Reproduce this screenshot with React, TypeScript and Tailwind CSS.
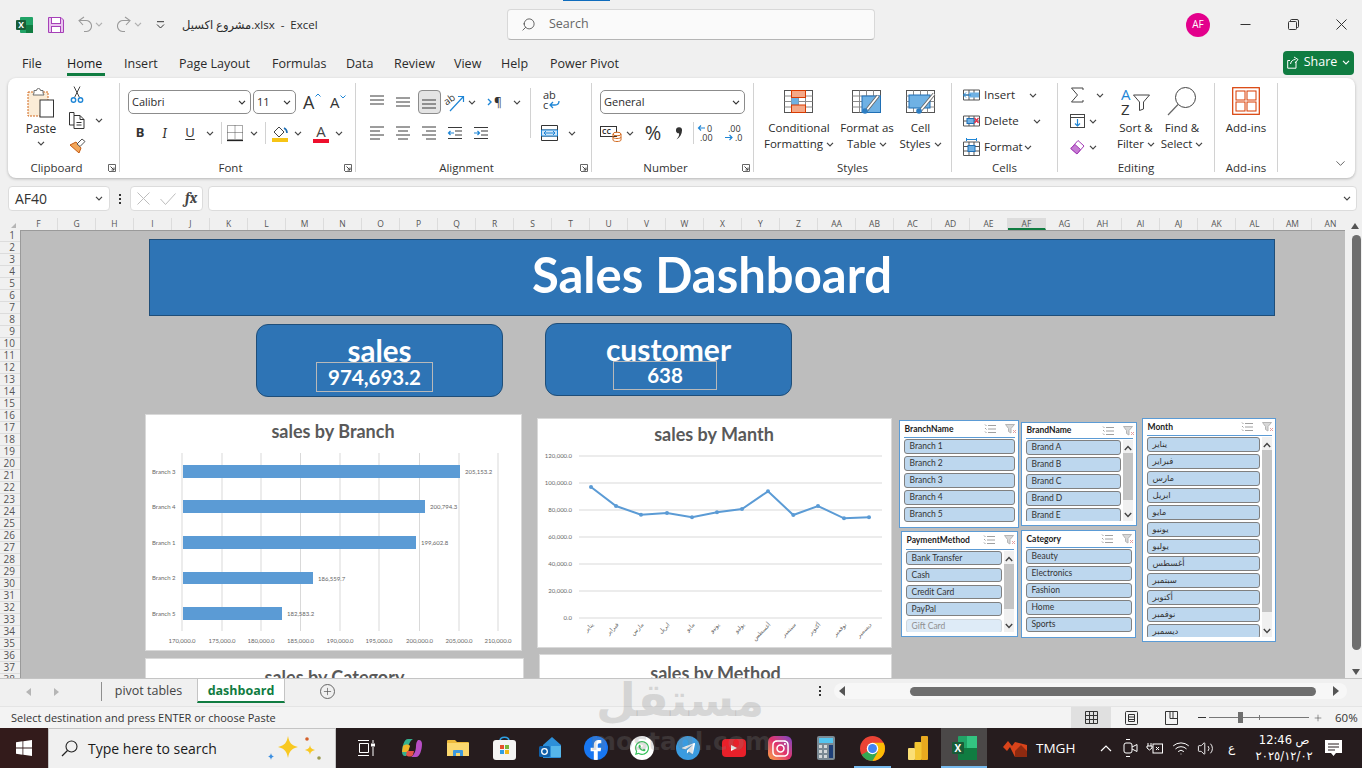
import { FaFacebookF, FaInstagram, FaTelegramPlane, FaWhatsapp } from 'react-icons/fa'
import { ChevronDown, Plus, Search, Volume2, Wifi } from 'lucide-react'

const calibri = { fontFamily: '"Lato", "DejaVu Sans", sans-serif' }

function Chev({ c = '#444' }: { c?: string }) {
  return (
    <svg width="8" height="5" viewBox="0 0 8 5" className="shrink-0">
      <path d="M1 .8l3 3 3-3" stroke={c} strokeWidth="1.2" fill="none" />
    </svg>
  )
}

function Launcher() {
  return (
    <svg width="8" height="8" viewBox="0 0 8 8" className="absolute right-[3px] bottom-[6px]">
      <path d="M.5 7V.5H7.5V7.5H1" stroke="#666" fill="none" strokeWidth="1" />
      <path d="M2.5 2.5L6 6M6 3.5V6H3.5" stroke="#444" fill="none" strokeWidth="1" />
    </svg>
  )
}

function Sep({ className = '' }: { className?: string }) {
  return <div className={`w-px self-stretch bg-[#d2d2d2] ${className}`} />
}

function Group({ w, label, launcher, children }: { w: string; label: string; launcher?: boolean; children: React.ReactNode }) {
  return (
    <div className={`relative flex h-full shrink-0 flex-col ${w}`}>
      <div className="min-h-0 flex-1">{children}</div>
      <div className={`h-5 text-center text-[11.5px] leading-5 text-[#333] ${launcher ? 'pr-[14px]' : ''}`}>{label}</div>
      {launcher && <Launcher />}
    </div>
  )
}

function Select({ w, text, className = '' }: { w: string; text: string; className?: string }) {
  return (
    <div className={`flex h-6 items-center justify-between rounded-[5px] border border-[#8c8c8c] bg-white pl-[3px] pr-[4px] text-[11px] ${w} ${className}`}>
      <span>{text}</span>
      <Chev c="#333" />
    </div>
  )
}

function AlignLines({ y, xs }: { y: number[]; xs: [number, number][] }) {
  return (
    <svg width="18" height="16" viewBox="0 0 18 16">
      {y.map((v, i) => (
        <path key={i} d={`M${xs[i][0]} ${v}H${xs[i][1]}`} stroke="#3a3a3a" strokeWidth="1" />
      ))}
    </svg>
  )
}

function IndentIcon({ inc }: { inc?: boolean }) {
  return (
    <svg width="16" height="14" viewBox="0 0 16 14">
      <path d="M1 1.5H15M8 5H15M8 9H15M1 12.5H15" stroke="#3a3a3a" />
      <path d={inc ? 'M1 7H6.5M4.5 5l2 2-2 2' : 'M7 7H1.5M3.5 5l-2 2 2 2'} stroke="#1f86d6" strokeWidth="1.2" fill="none" />
    </svg>
  )
}

function ClipboardGroup() {
  return (
    <Group w="w-[111px]" label="Clipboard" launcher>
      <div className="flex pt-2">
        <div className="ml-[5px] flex w-[56px] flex-col items-center">
          <svg width="28" height="32" viewBox="0 0 28 32" className="mt-px">
            <rect x="1" y="5" width="20" height="24" fill="#fbecd7" stroke="#d2691e" strokeDasharray="2 1" />
            <path d="M7 6V3.5h2.5a2 2 0 0 1 4 0H16V6l1 2H6z" fill="#fff" stroke="#6f6f6f" />
            <rect x="13" y="13" width="13.5" height="17" fill="#fff" stroke="#333" />
          </svg>
          <span className="mt-[2px] text-[12px] leading-4">Paste</span>
          <div className="mt-[4px]"><Chev /></div>
        </div>
        <div className="flex flex-col gap-[9px]">
          <svg width="16" height="17" viewBox="0 0 16 17">
            <path d="M5 .5l5.5 11M11 .5L5.5 11.5" stroke="#444" fill="none" />
            <circle cx="4.5" cy="14" r="2.2" fill="none" stroke="#1f86d6" strokeWidth="1.4" />
            <circle cx="11.5" cy="14" r="2.2" fill="none" stroke="#1f86d6" strokeWidth="1.4" />
          </svg>
          <div className="flex items-center">
            <svg width="16" height="17" viewBox="0 0 16 17" className="shrink-0">
              <path d="M5 3.5V.5h-4.5V13H5" fill="none" stroke="#333" />
              <path d="M5 3.5H11l4 4V16.5H5zM11 3.5V7.5H15M7.5 10.5h5M7.5 13h5" fill="#fff" stroke="#333" />
            </svg>
            <div className="ml-[10px]"><Chev /></div>
          </div>
          <svg width="17" height="15" viewBox="0 0 17 15">
            <path d="M1 7l6-3 5 6-2 5z" fill="#f2a65a" stroke="#c55a11" />
            <path d="M8 6l5-5 3 2.5-5 5z" fill="#fff" stroke="#555" />
          </svg>
        </div>
      </div>
    </Group>
  )
}

function FontGroup() {
  return (
    <Group w="w-[235px]" label="Font" launcher>
      <div className="mt-3 flex h-6 items-center pl-2">
        <Select w="w-[123px]" text="Calibri" />
        <Select w="w-[43px]" text="11" className="ml-[2px]" />
        <div className="relative ml-[7px] w-[15px] text-[18px] leading-none text-[#333]">A
          <svg width="6" height="4" viewBox="0 0 6 4" className="absolute -right-[3px] top-0"><path d="M.5 3.500L3 1l2.500 2.500" stroke="#1f86d6" fill="none" /></svg>
        </div>
        <div className="relative ml-[12px] w-[14px] text-[15px] leading-none text-[#333]">A
          <svg width="6" height="4" viewBox="0 0 6 4" className="absolute right-[-2px] top-0"><path d="M.5.5l2.5 2.500L5.500.5" stroke="#1f86d6" fill="none" /></svg>
        </div>
      </div>
      <div className="mt-[7px] flex h-6 items-center pl-2 text-[#333]">
        <span className="w-6 text-center text-[13px] font-bold" style={{ fontFamily: '"Noto Sans", sans-serif' }}>B</span>
        <span className="w-[25px] text-center font-serif text-[14px] italic">I</span>
        <span className="w-[26px] text-center text-[13px] underline underline-offset-2">U</span>
        <div className="ml-[3px]"><Chev /></div>
        <Sep className="my-[1px] ml-[7px]" />
        <svg width="18" height="17" viewBox="0 0 18 17" className="ml-1 shrink-0">
          <path d="M1.500.5H16.500V14.500H1.500zM9 .5V14.500M1.500 7.500H16.500" fill="none" stroke="#555" strokeDasharray="1 1" />
          <path d="M1 15.500H17" stroke="#222" strokeWidth="1.3" />
        </svg>
        <div className="ml-[6px]"><Chev /></div>
        <Sep className="my-[1px] ml-[7px]" />
        <svg width="18" height="18" viewBox="0 0 18 18" className="ml-[5px] shrink-0">
          <path d="M3 8l5-5 5 5-5 5z" fill="#fff" stroke="#444" />
          <path d="M13 4c2 1 3 3 3 5" stroke="#1f6fb5" strokeWidth="1.6" fill="none" />
          <rect x="1" y="14" width="16" height="4" fill="#f6c416" />
        </svg>
        <div className="ml-[5px]"><Chev /></div>
        <div className="ml-[11px] flex w-4 flex-col items-center">
          <span className="h-[14px] text-[15px] leading-[14px] text-[#444]">A</span>
          <div className="mt-[1px] h-1 w-4 bg-[#ee0f2d]" />
        </div>
        <div className="ml-[6px]"><Chev /></div>
      </div>
    </Group>
  )
}

function AlignmentGroup() {
  const wide: [number, number][] = [[2, 16], [2, 16], [2, 16], [2, 16]]
  return (
    <Group w="w-[235px]" label="Alignment" launcher>
      <div className="flex h-full pt-[1px]">
        <div className="w-[174px] pt-[11px]">
          <div className="flex h-6 items-center pl-2">
            <div className="flex w-[26px] justify-center"><AlignLines y={[2, 6, 10]} xs={wide} /></div>
            <div className="flex w-[26px] justify-center"><AlignLines y={[4, 8, 12]} xs={wide} /></div>
            <div className="mx-[1.500px] flex h-6 w-[23px] items-center justify-center rounded-[4px] border border-[#8c8c8c] bg-[#e4e4e4]"><AlignLines y={[6, 10, 14]} xs={wide} /></div>
            <svg width="22" height="20" viewBox="0 0 22 20" className="mx-[2px] shrink-0">
              <text x="1" y="11" fontSize="10" fill="#333" transform="rotate(-35 6 10)">ab</text>
              <path d="M6 19L19 5M14 4.500h5.500V10" stroke="#1f86d6" fill="none" strokeWidth="1.200" />
            </svg>
            <Chev />
            <svg width="20" height="14" viewBox="0 0 20 14" className="ml-[11px] shrink-0">
              <path d="M1 4l3 3-3 3" stroke="#1f86d6" fill="none" strokeWidth="1.400" />
              <text x="7" y="12" fontSize="12" fill="#333">¶</text>
            </svg>
            <div className="ml-[6px]"><Chev /></div>
          </div>
          <div className="mt-[7px] flex h-6 items-center pl-2">
            <div className="flex w-[26px] justify-center"><AlignLines y={[2, 6, 10, 14]} xs={[[2, 16], [2, 12], [2, 16], [2, 12]]} /></div>
            <div className="flex w-[26px] justify-center"><AlignLines y={[2, 6, 10, 14]} xs={[[2, 16], [4, 14], [2, 16], [4, 14]]} /></div>
            <div className="flex w-[26px] justify-center"><AlignLines y={[2, 6, 10, 14]} xs={[[2, 16], [6, 16], [2, 16], [6, 16]]} /></div>
            <div className="flex w-[26px] justify-center"><IndentIcon /></div>
            <div className="flex w-[26px] justify-center"><IndentIcon inc /></div>
          </div>
        </div>
        <Sep className="mb-[20px] mt-[9px]" />
        <div className="pt-[11px]">
          <div className="flex h-6 pl-[8px]">
            <svg width="22" height="22" viewBox="0 0 22 22">
              <text x="4" y="9" fontSize="11" fill="#333">ab</text>
              <text x="4" y="19" fontSize="11" fill="#333">c</text>
              <path d="M20 11c0 3-1 4-4 4h-5M14 12l-3 3 3 3" stroke="#1f86d6" fill="none" strokeWidth="1.300" />
            </svg>
          </div>
          <div className="mt-[7px] flex h-6 items-center pl-[10px]">
            <svg width="17" height="16" viewBox="0 0 17 16" className="shrink-0">
              <path d="M.5.5h16v15H.5zM.5 5H16.500M.5 11H16.500" fill="#fff" stroke="#333" />
              <path d="M.5 5h16v6H.5z" fill="#cfe5f8" stroke="#1f86d6" />
              <path d="M3 8h11M5 6l-2 2 2 2M12 6l2 2-2 2" stroke="#1f86d6" fill="none" />
            </svg>
            <div className="ml-[10px]"><Chev /></div>
          </div>
        </div>
      </div>
    </Group>
  )
}

function NumberGroup() {
  return (
    <Group w="w-[161px]" label="Number" launcher>
      <div className="mt-3 pl-2"><Select w="w-[145px]" text="General" /></div>
      <div className="mt-[7px] flex h-6 items-center pl-2 text-[#333]">
        <svg width="22" height="18" viewBox="0 0 22 18" className="shrink-0">
          <rect x=".5" y="2.500" width="16" height="10" fill="#fff" stroke="#333" />
          <text x="2" y="10" fontSize="7" fontWeight="bold" fill="#333">CC</text>
          <ellipse cx="17" cy="10" rx="4" ry="1.800" fill="#fff" stroke="#d2691e" />
          <path d="M13 10v6c0 2 8 2 8 0v-6M13 13c0 2 8 2 8 0" fill="none" stroke="#d2691e" />
        </svg>
        <div className="ml-1"><Chev /></div>
        <span className="ml-[9px] w-5 text-center text-[20px] leading-none">%</span>
        <svg width="8" height="13" viewBox="0 0 8 13" className="ml-[12px] shrink-0"><path d="M1 3a3 3 0 1 1 6 .5C7 7 5 10.500 1.500 12.500 3.500 10 4.500 8 4 6.200A3 3 0 0 1 1 3z" fill="#333" /></svg>
        <Sep className="my-[1px] ml-[10px]" />
        <svg width="20" height="18" viewBox="0 0 20 18" className="ml-[3px] shrink-0">
          <path d="M8 4H1.500M4 1.500L1.500 4 4 6.500" fill="none" stroke="#1f86d6" strokeWidth="1.200" />
          <text x="10" y="8" fontSize="9" fill="#333">0</text>
          <text x="3" y="17" fontSize="9" fill="#333">.00</text>
        </svg>
        <svg width="20" height="18" viewBox="0 0 20 18" className="ml-[7px] shrink-0">
          <text x="4" y="8" fontSize="9" fill="#333">.00</text>
          <path d="M1 13.500H8M5.500 11l2.500 2.500L5.500 16" fill="none" stroke="#1f86d6" strokeWidth="1.200" />
          <text x="11" y="17" fontSize="9" fill="#333">.0</text>
        </svg>
      </div>
    </Group>
  )
}

function BigCol({ w, icon, lines, up }: { w: string; icon: React.ReactNode; lines: [string, string | null, boolean?]; up?: boolean }) {
  return (
    <div className={`flex flex-col items-center ${w}`}>
      <div className={`flex h-[30px] justify-center ${up ? '-mt-[3px] mb-[3px]' : ''}`}>{icon}</div>
      <span className="h-4 whitespace-nowrap text-[11.500px] leading-4">{lines[0]}</span>
      {lines[1] && (
        <span className="flex h-4 items-center gap-[3px] whitespace-nowrap text-[11.500px] leading-4">
          {lines[1]} {lines[2] && <Chev />}
        </span>
      )}
    </div>
  )
}

function GridBase({ children }: { children?: React.ReactNode }) {
  return (
    <svg width="30" height="24" viewBox="0 0 30 24">
      <rect x=".5" y=".5" width="28" height="22" fill="#fff" stroke="#555" />
      <path d="M7.500.5V22.500M14.500.5V22.500M21.500.5V22.500M.5 6H28.500M.5 11.500H28.500M.5 17H28.500" stroke="#8a8a8a" />
      {children}
    </svg>
  )
}

function StylesGroup() {
  return (
    <Group w="w-[197px]" label="Styles">
      <div className="flex pt-3">
        <BigCol w="w-[90px]" lines={['Conditional', 'Formatting', true]} icon={
          <GridBase>
            <rect x="7.500" y=".5" width="14" height="7" fill="#f4a988" stroke="#d83b01" />
            <rect x="7.500" y="8" width="7" height="7" fill="#6fb1e4" />
            <rect x="7.500" y="15" width="14" height="7.500" fill="#f4a988" stroke="#d83b01" />
          </GridBase>} />
        <BigCol w="w-[46px]" lines={['Format as', 'Table', true]} icon={
          <GridBase>
            <rect x="10" y="6" width="18.500" height="16.500" fill="#6fb1e4" stroke="#1f6fb5" />
            <path d="M14 21L26 6" stroke="#666" strokeWidth="3.500" />
            <path d="M14 21L26 6" stroke="#fff" strokeWidth="1.800" />
            <circle cx="13" cy="21" r="2.800" fill="#2d7dc2" />
          </GridBase>} />
        <BigCol w="w-[61px]" lines={['Cell', 'Styles', true]} icon={
          <GridBase>
            <rect x="3" y="5" width="21" height="13" fill="#6fb1e4" stroke="#1f6fb5" />
            <path d="M14 21L28 4" stroke="#666" strokeWidth="3.500" />
            <path d="M14 21L28 4" stroke="#fff" strokeWidth="1.800" />
            <circle cx="13" cy="21" r="2.800" fill="#2d7dc2" />
          </GridBase>} />
      </div>
    </Group>
  )
}

function CellRow({ icon, text, w }: { icon: React.ReactNode; text: string; w: string }) {
  return (
    <div className="flex h-[18px] items-center pl-[11px]">
      <div className="w-[17px] shrink-0">{icon}</div>
      <span className={`ml-1 shrink-0 text-[11.500px] ${w}`}>{text}</span>
      <Chev />
    </div>
  )
}

function CellsGroup() {
  const grid = 'M.5 3h16v10H.5zM6 3V13M11 3V13M.5 8H16.500'
  return (
    <Group w="w-[105px]" label="Cells">
      <div className="flex flex-col gap-2 pt-2">
        <CellRow text="Insert" w="w-[45px]" icon={
          <svg width="17" height="16" viewBox="0 0 17 16"><path d={grid} fill="#fff" stroke="#555" /><rect x="6" y="5.500" width="10" height="5" fill="#6fb1e4" /><path d="M8 8H.5M3 5.500L.5 8 3 10.500" stroke="#1f86d6" fill="none" /></svg>} />
        <CellRow text="Delete" w="w-[49px]" icon={
          <svg width="17" height="16" viewBox="0 0 17 16"><path d={grid} fill="#fff" stroke="#555" /><rect x="4" y="5.500" width="7" height="5" fill="#6fb1e4" stroke="#1f6fb5" /><path d="M11.500 5l4 5M15.500 5l-4 5" stroke="#e8304a" strokeWidth="1.300" /></svg>} />
        <CellRow text="Format" w="w-[40px]" icon={
          <svg width="17" height="18" viewBox="0 0 17 18"><path d="M.5 4h16v13.500H.5zM6 4V17.500M11 4V17.500M.5 8.500H16.500M.5 13H16.500" fill="#fff" stroke="#555" /><rect x="5" y="7.500" width="7" height="6" fill="#6fb1e4" stroke="#1f6fb5" /><path d="M3.500 1.500h10M3.500 0v3M13.500 0v3" stroke="#1f86d6" /></svg>} />
      </div>
    </Group>
  )
}

function EditingGroup() {
  return (
    <Group w="w-[156px]" label="Editing">
      <div className="flex">
        <div className="flex w-[54px] flex-col gap-2 pl-3 pt-2">
          <div className="flex h-[18px] items-center">
            <svg width="15" height="16" viewBox="0 0 15 16" className="shrink-0"><path d="M13 3V1H1.500L7.500 8 1.500 15H13v-2" stroke="#444" fill="none" /></svg>
            <div className="ml-[11px]"><Chev /></div>
          </div>
          <div className="flex h-[18px] items-center">
            <svg width="15" height="16" viewBox="0 0 15 16" className="shrink-0"><rect x=".5" y="1.500" width="14" height="13" fill="#fff" stroke="#444" /><path d="M.5 4.500H14.500" stroke="#444" /><path d="M7.500 6v7M5 10.500l2.500 2.500L10 10.500" stroke="#1f86d6" fill="none" strokeWidth="1.200" /></svg>
            <div className="ml-1"><Chev /></div>
          </div>
          <div className="flex h-[18px] items-center">
            <svg width="15" height="16" viewBox="0 0 15 16" className="shrink-0"><path d="M.8 9.500L8 1.500l6 5.500-7 8z" fill="#fff" stroke="#a23ab5" /><path d="M.8 9.500L5 5.500l5.500 5-3.500 4.500z" fill="#c67bd4" stroke="#a23ab5" /></svg>
            <div className="ml-1"><Chev /></div>
          </div>
        </div>
        <div className="flex pt-3">
          <BigCol w="w-[48px]" up lines={['Sort &', 'Filter', true]} icon={
            <svg width="30" height="29" viewBox="0 0 30 29">
              <text x="0" y="13" fontSize="15" fill="#1f86d6">A</text>
              <text x="0" y="28" fontSize="15" fill="#333">Z</text>
              <path d="M12.500 8h16L22.500 15v7l-4 1.500V15z" fill="#fff" stroke="#444" />
            </svg>} />
          <BigCol w="w-[44px]" up lines={['Find &', 'Select', true]} icon={
            <svg width="30" height="29" viewBox="0 0 30 29">
              <circle cx="18.500" cy="10.500" r="10" fill="#fff" stroke="#444" />
              <path d="M11 17.500L1 28" stroke="#666" strokeWidth="1.200" />
            </svg>} />
        </div>
      </div>
    </Group>
  )
}

function AddinsGroup() {
  return (
    <Group w="w-[62px]" label="Add-ins">
      <div className="flex pt-3">
        <BigCol w="w-[62px]" up lines={['Add-ins', null]} icon={
          <svg width="28" height="28" viewBox="0 0 28 28" fill="none" stroke="#d83b01">
            <rect x=".7" y=".7" width="26.600" height="26.600" strokeWidth="1.200" />
            <rect x="4" y="4" width="9" height="9" /><rect x="15" y="4" width="9" height="9" />
            <rect x="4" y="15" width="9" height="9" /><rect x="15" y="15" width="9" height="9" />
          </svg>} />
      </div>
    </Group>
  )
}

function TitleBar() {
  return (
    <div className="relative flex h-[47px] shrink-0 items-center pl-4 pt-[2px] text-[#2b2b2b]">
      <div className="absolute left-[563px] top-0 h-px w-[47px] bg-[#0f6cbd]" />
      <svg width="17" height="16" viewBox="0 0 17 16" className="shrink-0">
        <rect x="4" y="0" width="13" height="16" rx="1" fill="#21a366" />
        <rect x="10" y="8" width="7" height="8" fill="#107c41" />
        <rect x="0" y="3" width="10" height="10" rx="1" fill="#185c37" />
        <text x="2.300" y="11" fontSize="8.500" fontWeight="bold" fill="#fff">X</text>
      </svg>
      <svg width="16" height="16" viewBox="0 0 16 16" className="ml-[15px] shrink-0">
        <path d="M.5.5H13L15.500 3V15.500H.5z" fill="#e9c4ee" stroke="#a640b8" />
        <rect x="3.500" y=".5" width="9" height="6" fill="#fff" stroke="#a640b8" />
        <rect x="3.500" y="9.500" width="9" height="6" fill="#fff" stroke="#a640b8" />
      </svg>
      <svg width="14" height="17" viewBox="0 0 14 17" className="ml-[14px] shrink-0">
        <path d="M5 9L1 4.500 6 1M1 4.500h6.500a5.500 5.500 0 0 1 1 11H6" stroke="#9a9a9a" fill="none" strokeWidth="1.100" />
      </svg>
      <div className="ml-[3px]"><Chev c="#b0b0b0" /></div>
      <svg width="14" height="17" viewBox="0 0 14 17" className="ml-[14px] shrink-0">
        <path d="M9 9l4-4.500L8 1M13 4.500H6.500a5.500 5.500 0 0 0-1 11H8" stroke="#9a9a9a" fill="none" strokeWidth="1.100" />
      </svg>
      <div className="ml-[3px]"><Chev c="#b0b0b0" /></div>
      <svg width="9" height="8" viewBox="0 0 9 8" className="ml-[14px] shrink-0">
        <path d="M1 .7H8M1 3.500l3.500 3.500L8 3.500" stroke="#333" fill="none" />
      </svg>
      <div className="ml-[17px] w-[325px] whitespace-pre text-[11.500px]">مشروع اكسيل.xlsx  -  Excel</div>
      <div className="flex h-[31px] w-[368px] items-center rounded-[4px] border border-[#d8d8d8] border-b-[#b5b5b5] bg-[#fafafa] pl-[13px] text-[12.500px] text-[#666]">
        <Search size={15} strokeWidth={1.300} className="scale-x-[-1]" color="#444" />
        <span className="ml-[13px]">Search</span>
      </div>
      <div className="ml-[311px] flex h-6 w-6 items-center justify-center rounded-full bg-[#e3008c] text-[10px] text-white">AF</div>
      <svg width="11" height="11" viewBox="0 0 11 11" className="ml-[30px]"><path d="M.5 5.500h10" stroke="#333" /></svg>
      <svg width="11" height="11" viewBox="0 0 11 11" className="ml-[37px]"><path d="M2.500 2.500V1.500a1 1 0 0 1 1-1H9a1.500 1.500 0 0 1 1.500 1.500v5.500a1 1 0 0 1-1 1H8.500" stroke="#333" fill="none" /><rect x=".5" y="2.500" width="8" height="8" rx="1" fill="none" stroke="#333" /></svg>
      <svg width="11" height="11" viewBox="0 0 11 11" className="ml-[37px]"><path d="M.5.5l10 10M10.500.5l-10 10" stroke="#333" /></svg>
    </div>
  )
}

function TabsRow() {
  const tabs: [string, string][] = [['File', 'w-[45px]'], ['Home', 'w-[57px]'], ['Insert', 'w-[55px]'], ['Page Layout', 'w-[93px]'], ['Formulas', 'w-[74px]'], ['Data', 'w-[48px]'], ['Review', 'w-[60px]'], ['View', 'w-[47px]'], ['Help', 'w-[49px]'], ['Power Pivot', 'w-[90px]']]
  return (
    <div className="flex h-[31px] shrink-0 items-center pl-[22px] pr-2 text-[12.500px] text-[#2b2b2b]">
      {tabs.map(([t, w]) => (
        <div key={t} className={`relative mt-[3px] shrink-0 ${w}`}>
          <span className={t === 'Home' ? 'font-medium text-[#1a1a1a]' : ''}>{t}</span>
          {t === 'Home' && <div className="absolute left-0 top-[18px] h-[3px] w-[38px] bg-[#107c41]" />}
        </div>
      ))}
      <div className="ml-auto flex h-6 w-[71px] items-center justify-center gap-[5px] rounded-[4px] bg-[#107c41] text-[12.500px] text-white">
        <svg width="12" height="13" viewBox="0 0 12 13"><path d="M9 5.500v6.700H.7V4.500H3M3.500 8C4 5 6 3.500 8.500 3.500M7 1l4 2.500L8 7" stroke="#fff" fill="none" /></svg>
        Share
        <Chev c="#fff" />
      </div>
    </div>
  )
}

function Ribbon() {
  const s = 'mb-[6px] mt-[5px]'
  return (
    <div className="ml-2 flex h-[100px] w-[1347px] shrink-0 rounded-lg bg-white text-[#2b2b2b] shadow-[0_1px_3px_rgba(0,0,0,0.25)]">
      <ClipboardGroup /><Sep className={s} />
      <FontGroup /><Sep className={s} />
      <AlignmentGroup /><Sep className={s} />
      <NumberGroup /><Sep className={s} />
      <StylesGroup /><Sep className={s} />
      <CellsGroup /><Sep className={s} />
      <EditingGroup /><Sep className={s} />
      <AddinsGroup /><Sep className={s} />
      <div className="flex flex-1 items-end justify-end pb-[7px] pr-[7px]">
        <ChevronDown size={15} strokeWidth={1.300} color="#444" />
      </div>
    </div>
  )
}

function FormulaBar() {
  return (
    <div className="flex h-[33px] shrink-0 items-end pl-2 text-[#333]">
      <div className="flex h-[25px] w-[102px] items-center justify-between rounded-[4px] border border-[#dcdcdc] bg-white pl-[6px] pr-[6px] text-[14px]">
        AF40
        <Chev />
      </div>
      <div className="flex h-[25px] w-5 flex-col items-center justify-center gap-[2px]">
        <div className="h-[2px] w-[2px] bg-[#333]" /><div className="h-[2px] w-[2px] bg-[#333]" /><div className="h-[2px] w-[2px] bg-[#333]" />
      </div>
      <div className="flex h-[25px] w-[73px] items-center rounded-[4px] border border-[#dcdcdc] bg-white pl-[6px]">
        <svg width="13" height="13" viewBox="0 0 13 13"><path d="M.5.5l12 12M12.500.5l-12 12" stroke="#bdbdbd" /></svg>
        <svg width="16" height="12" viewBox="0 0 16 12" className="ml-[10px]"><path d="M.5 6l5 5.500L15.500.5" stroke="#bdbdbd" fill="none" /></svg>
        <span className="ml-[9px] font-serif text-[15px] font-bold italic leading-none text-[#444]">fx</span>
      </div>
      <div className="ml-[5px] flex h-[25px] w-[1149px] items-center justify-end rounded-[4px] border border-[#dcdcdc] bg-white pr-[5px]">
        <Chev />
      </div>
    </div>
  )
}

const columns = ['F', 'G', 'H', 'I', 'J', 'K', 'L', 'M', 'N', 'O', 'P', 'Q', 'R', 'S', 'T', 'U', 'V', 'W', 'X', 'Y', 'Z', 'AA', 'AB', 'AC', 'AD', 'AE', 'AF', 'AG', 'AH', 'AI', 'AJ', 'AK', 'AL', 'AM', 'AN']

function ColumnHeaders() {
  return (
    <div className="mt-[7px] flex h-3 shrink-0">
      <div className="flex h-3 w-[1345px] shrink-0 overflow-hidden bg-[#f0f0f0]">
        <div className="flex h-3 w-5 shrink-0 items-end justify-end pb-[2px] pr-1">
          <div className="h-0 w-0 border-b-[5px] border-l-[5px] border-b-[#b5b5b5] border-l-transparent" />
        </div>
        {columns.map(c => (
          <div key={c} className={`h-3 w-[38px] shrink-0 border-r border-[#dcdcdc] text-center text-[8.500px] leading-[12px] text-[#555] ${c === 'AF' ? 'border-b-2 border-b-[#107c41] bg-[#dcdcdc]' : ''}`}>{c}</div>
        ))}
      </div>
      <div className="flex w-[17px] justify-center pl-[3px] pt-[5px]">
        <div className="h-0 w-0 border-x-[4px] border-b-[6px] border-x-transparent border-b-[#555]" />
      </div>
    </div>
  )
}

function FilterIcons() {
  return (
    <div className="-mr-[2px] ml-auto flex items-center gap-[9px]">
      <svg width="12" height="10" viewBox="0 0 12 10" stroke="#a0a0a0" fill="none"><path d="M4 1.500H12M4 5H12M4 8.500H12M1 .5l1.500 1.500M1 4l1.500 1.500M1 7.500l1.500 1.500" /></svg>
      <svg width="12" height="10" viewBox="0 0 12 10"><path d="M.5.5h9L6 4.500v4.500L3.500 7.500V4.500z" fill="#d8d8d8" stroke="#b5b5b5" /><path d="M8 6l3 3M11 6l-3 3" stroke="#e4a0a0" /></svg>
    </div>
  )
}

function ScrollTrack({ thumb, gap }: { thumb: string; gap: string }) {
  return (
    <div className="ml-[2px] flex h-full w-[10.500px] shrink-0 flex-col items-center bg-[#f0f0f0]">
      <svg width="8" height="6" viewBox="0 0 8 6" className="mt-[5px] shrink-0"><path d="M.8 5L4 1.500 7.200 5" stroke="#444" strokeWidth="1.400" fill="none" /></svg>
      <div className={`w-full shrink-0 bg-[#c4c4c4] ${gap} ${thumb}`} />
      <svg width="8" height="6" viewBox="0 0 8 6" className="mb-[3px] mt-auto shrink-0"><path d="M.8 1L4 4.500 7.200 1" stroke="#444" strokeWidth="1.400" fill="none" /></svg>
    </div>
  )
}

function Slicer({ className, title, items, faded, track, head, padTop = '' }: { className: string; title: string; items: string[]; faded?: string; track?: React.ReactNode; head: string; padTop?: string }) {
  return (
    <div className={`absolute flex flex-col border-[1.500px] border-[#5b9bd5] bg-white ${className}`} style={calibri}>
      <div className={`mx-[3.500px] flex shrink-0 items-center border-b border-[#5b9bd5] pl-px ${head}`}>
        <span className="text-[8.500px] font-bold text-[#1c1c1c]">{title}</span>
        <FilterIcons />
      </div>
      <div className={`flex min-h-0 flex-1 pb-[4px] pl-[4px] pr-[3px] ${padTop}`}>
        <div className="min-h-0 min-w-0 flex-1 overflow-hidden">
          {items.map(i => (
            <div key={i} className={`mb-[2.500px] h-[14.500px] truncate rounded-[3px] border pl-[4.500px] text-[8.500px] leading-[12.500px] ${i === faded ? 'border-[#d0d7dd] bg-[#deebf7] text-[#8f8f8f]' : 'border-[#808080] bg-[#bdd7ee] text-[#333]'}`}>{i}</div>
          ))}
        </div>
        {track}
      </div>
    </div>
  )
}

const arabicMonths = ['يناير', 'فبراير', 'مارس', 'ابريل', 'مايو', 'يونيو', 'يوليو', 'أغسطس', 'سبتمبر', 'أكتوبر', 'نوفمبر', 'ديسمبر']
const chartBox = 'absolute bg-white outline-1 -outline-offset-1 outline-[#d9d9d9]'

function BranchChart() {
  const bars: [string, number, number, number, string, number][] = [
    ['Branch 3', 465, 460, 13, '205,153.2', 465],
    ['Branch 4', 500, 425, 13, '200,794.3', 430],
    ['Branch 1', 536, 416, 13, '199,602.8', 421],
    ['Branch 2', 572, 313, 12, '186,559.7', 318],
    ['Branch 5', 607, 282, 13, '182,583.2', 287],
  ]
  const grid = [182, 222, 261, 300.5, 340, 379, 419.5, 459, 498]
  const ticks = ['170,000.0', '175,000.0', '180,000.0', '185,000.0', '190,000.0', '195,000.0', '200,000.0', '205,000.0', '210,000.0']
  return (
    <svg viewBox="145 414 377 237" width="377" height="237" className={`${chartBox} left-[125px] top-[184px]`} style={calibri}>
      <text x="333" y="438" textAnchor="middle" fontSize="18" fontWeight="bold" fill="#595959">sales by Branch</text>
      {grid.map(x => <path key={x} d={`M${x} 453V631`} stroke="#d9d9d9" />)}
      {bars.map(([name, y, end, h, val, vx]) => (
        <g key={name} fontSize="6" fill="#666">
          <text x="175.500" y={y + h / 2 + 2} textAnchor="end">{name}</text>
          <rect x="183" y={y} width={end - 183} height={h} fill="#5b9bd5" />
          <text x={vx} y={y + h / 2 + 2.500}>{val}</text>
        </g>
      ))}
      {ticks.map((t, i) => <text key={t} x={grid[i]} y="643" fontSize="6" fill="#666" textAnchor="middle">{t}</text>)}
    </svg>
  )
}

function MonthChart() {
  const ys: [number, string][] = [[456, '120,000.0'], [483, '100,000.0'], [510, '80,000.0'], [537, '60,000.0'], [564, '40,000.0'], [591, '20,000.0'], [618, '0.0']]
  const pts: [number, number][] = [[591, 487], [616, 506], [641, 514.7], [667, 513], [692, 517.3], [717, 512.3], [742, 509], [768, 491.3], [793.3, 515], [818, 506], [844, 518.3], [869, 517.3]]
  return (
    <svg viewBox="537 418 355 230" width="355" height="230" className={`${chartBox} left-[517px] top-[188px]`} style={calibri}>
      <text x="714" y="441" textAnchor="middle" fontSize="18" fontWeight="bold" fill="#595959">sales by Manth</text>
      {ys.map(([y, t]) => (
        <g key={t}>
          <path d={`M579 ${y}H882`} stroke="#d9d9d9" />
          <text x="572" y={y + 2} textAnchor="end" fontSize="6" fill="#666">{t}</text>
        </g>
      ))}
      <polyline points={pts.map(p => p.join(',')).join(' ')} fill="none" stroke="#5b9bd5" strokeWidth="2" />
      {pts.map(([x, y]) => <circle key={x} cx={x} cy={y} r="2" fill="#5b9bd5" />)}
      {pts.map(([x], i) => (
        <text key={x} x={x + 3} y="625" textAnchor="end" fontSize="6" fill="#666" fontFamily="DejaVu Sans" transform={`rotate(-45 ${x + 3} 625)`}>{arabicMonths[i]}</text>
      ))}
    </svg>
  )
}

function Dashboard() {
  return (
    <div className="relative h-full w-[1325px] shrink-0 overflow-hidden bg-[#bdbdbd] shadow-[inset_1px_1px_0_#9a9a9a]">
      <div className="absolute left-[129px] top-[9px] flex h-[77px] w-[1126px] items-center justify-center border border-[#1f4e79] bg-[#2e74b5] pb-[6px] text-[49px] font-bold text-white" style={calibri}>Sales Dashboard</div>

      <div className="absolute left-[236px] top-[94px] h-[73px] w-[247px] rounded-[12px] border border-[#1f4e79] bg-[#2e74b5] text-center text-[29.500px] font-bold leading-none text-white" style={calibri}>
        <div className="mt-[11px]">sales</div>
        <div className="absolute left-[59px] top-[37px] flex h-[30px] w-[117px] items-center justify-center border border-[#b9b9b9] text-[20.500px] font-bold">974,693.2</div>
      </div>
      <div className="absolute left-[525px] top-[93px] h-[73px] w-[247px] rounded-[12px] border border-[#1f4e79] bg-[#2e74b5] text-center text-[30px] font-bold leading-none text-white" style={calibri}>
        <div className="mt-[10px]">customer</div>
        <div className="absolute left-[67px] top-[37px] flex h-[29px] w-[104px] items-center justify-center border border-[#b9b9b9] text-[20.500px] font-bold">638</div>
      </div>

      <BranchChart />
      <MonthChart />
      <div className="absolute left-[125px] top-[428px] h-[60px] w-[379px] border border-[#d9d9d9] bg-white pt-[5px] text-center text-[18px] font-bold text-[#595959]" style={calibri}>sales by Category</div>
      <div className="absolute left-[519px] top-[424px] h-[60px] w-[353px] border border-[#d9d9d9] bg-white pt-[5px] text-center text-[18px] font-bold text-[#595959]" style={calibri}>sales by Method</div>

      <Slicer className="left-[879px] top-[190px] h-[108px] w-[120px]" head="h-[17px]" title="BranchName" items={['Branch 1', 'Branch 2', 'Branch 3', 'Branch 4', 'Branch 5']} padTop="pt-[1px]" />
      <Slicer className="left-[1001px] top-[192px] h-[104px] w-[116px]" head="h-[16px]" title="BrandName" items={['Brand A', 'Brand B', 'Brand C', 'Brand D', 'Brand E']} padTop="pt-[1px]" track={<ScrollTrack thumb="h-[47px]" gap="mt-[2px]" />} />
      <Slicer className="left-[881px] top-[301px] h-[106px] w-[117px]" head="h-[17.500px]" title="PaymentMethod" items={['Bank Transfer', 'Cash', 'Credit Card', 'PayPal', 'Gift Card']} faded="Gift Card" padTop="pt-[1px]" track={<ScrollTrack thumb="h-[45px]" gap="mt-[2px]" />} />
      <Slicer className="left-[1001px] top-[300px] h-[108px] w-[115px]" head="h-[17px]" title="Category" items={['Beauty', 'Electronics', 'Fashion', 'Home', 'Sports']} padTop="pt-[1px]" />
      <Slicer className="left-[1122px] top-[188px] h-[224px] w-[134px]" head="h-[17px]" title="Month" items={arabicMonths} padTop="pt-[1px]" track={<ScrollTrack thumb="h-[162px]" gap="mt-[2px]" />} />
    </div>
  )
}

function Sheet() {
  const rows = Array.from({ length: 38 }, (_, i) => i + 1)
  return (
    <div className="flex h-[448px] shrink-0 overflow-hidden">
      <div className="w-5 shrink-0">
        {rows.map(r => (
          <div key={r} className="h-3 border-b border-[#dcdcdc] pr-[5px] text-right text-[10px] leading-[11px] text-[#555]">{r}</div>
        ))}
      </div>
      <Dashboard />
      <div className="flex w-[17px] shrink-0 flex-col items-center bg-[#f0f0f0] pl-[5px]">
        <div className="mt-[5px] h-[415px] w-[9px] shrink-0 rounded-full bg-[#6e6e6e]" />
        <div className="mt-[19px] h-0 w-0 border-x-[4px] border-t-[6px] border-x-transparent border-t-[#555]" />
      </div>
    </div>
  )
}

function SheetTabs() {
  return (
    <div className="flex h-[28px] shrink-0 items-start border-t border-[#c4c4c4] bg-[#f0f0f0] text-[12.500px]">
      <div className="ml-[26px] mt-[9px] h-0 w-0 border-y-[4px] border-r-[5px] border-y-transparent border-r-[#b5b5b5]" />
      <div className="ml-[23px] mt-[9px] h-0 w-0 border-y-[4px] border-l-[5px] border-y-transparent border-l-[#b5b5b5]" />
      <div className="ml-[42px] mt-[3px] h-[19px] w-px bg-[#8f8f8f]" />
      <div className="h-[24px] w-[95px] pr-[2px] pt-[3px] text-center text-[#444]">pivot tables</div>
      <div className="h-[24px] w-[88px] border-x border-b-2 border-[#107c41] border-x-[#c4c4c4] bg-white pt-[3px] text-center font-bold text-[#107c41]">dashboard</div>
      <div className="ml-[35px] mt-[5px] flex h-[15px] w-[15px] items-center justify-center rounded-full border border-[#666]">
        <Plus size={11} strokeWidth={1.500} color="#555" />
      </div>
      <div className="ml-[484px] mt-[7px] flex flex-col gap-[2px]">
        <div className="h-[2px] w-[2px] bg-[#333]" /><div className="h-[2px] w-[2px] bg-[#333]" /><div className="h-[2px] w-[2px] bg-[#333]" />
      </div>
      <div className="ml-[13px] mt-[4px] flex h-[16px] w-[513px] items-center rounded-full bg-[#f7f7f7] pl-[5px]">
        <div className="h-0 w-0 border-y-[5px] border-r-[6px] border-y-transparent border-r-[#555]" />
        <div className="ml-[65px] h-[9px] w-[406px] rounded-full bg-[#6e6e6e]" />
        <div className="ml-[17px] h-0 w-0 border-y-[5px] border-l-[6px] border-y-transparent border-l-[#555]" />
      </div>
    </div>
  )
}

function StatusBar() {
  return (
    <div className="flex h-[22px] shrink-0 items-center border-t border-[#e4e4e4] bg-[#f3f3f3] pl-[11px] text-[11px] text-[#333]">
      <span className="mt-[1px] w-[1060px]">Select destination and press ENTER or choose Paste</span>
      <div className="flex h-full w-10 items-center justify-center bg-[#e0e0e0]">
        <svg width="13" height="13" viewBox="0 0 13 13"><path d="M.5.5h12v12H.5zM4.500.5v12M8.500.5v12M.5 4.500h12M.5 8.500h12" fill="none" stroke="#333" /></svg>
      </div>
      <div className="flex h-full w-10 items-center justify-center">
        <svg width="13" height="14" viewBox="0 0 13 14"><rect x=".5" y=".5" width="12" height="13" rx="1" fill="none" stroke="#333" /><path d="M3.500 3.500h6v7h-6zM3.500 6h6M3.500 8.500h6" fill="none" stroke="#333" /></svg>
      </div>
      <div className="flex h-full w-10 items-center justify-center">
        <svg width="13" height="14" viewBox="0 0 13 14"><path d="M.5.5h12v13H.5zM5 .5v7h3V.5M8 7.500h4.500" fill="none" stroke="#333" /></svg>
      </div>
      <div className="ml-[7px] h-px w-2 bg-[#333]" />
      <div className="relative ml-[3px] h-px w-[100px] bg-[#777]">
        <div className="absolute left-[29px] -top-[5px] h-[11px] w-[5px] bg-[#6e6e6e]" />
        <div className="absolute left-[50px] -top-[2px] h-[5px] w-px bg-[#777]" />
      </div>
      <Plus size={10} strokeWidth={1.200} color="#333" className="ml-[4px]" />
      <span className="ml-[12px] text-[11.500px]">60%</span>
    </div>
  )
}

function TaskIcon({ children, active, line }: { children: React.ReactNode; active?: boolean; line?: string }) {
  return (
    <div className={`relative flex h-10 w-[46px] shrink-0 items-center justify-center ${active ? 'bg-[#4b4848]' : ''}`}>
      {children}
      {line && <div className={`absolute bottom-0 h-[2px] bg-[#76b9ed] ${line}`} />}
    </div>
  )
}

function Taskbar() {
  return (
    <div className="flex h-10 shrink-0 items-center bg-[#261c1e] text-white">
      <div className="flex h-10 w-12 shrink-0 items-center justify-center bg-[#331b1b]">
        <svg width="16" height="16" viewBox="0 0 16 16" fill="#fff"><path d="M0 2.200l6.500-.9v6.300H0zM7.300 1.200L16 0v7.600H7.300zM0 8.400h6.500v6.300L0 13.800zM7.300 8.400H16V16l-8.700-1.200z" /></svg>
      </div>
      <div className="flex h-10 w-[288px] shrink-0 items-center border-x border-t border-[#c4c4c4] bg-[#f0f0f0] pl-[12px] text-[14px] text-[#1a1a1a]">
        <svg width="17" height="17" viewBox="0 0 17 17" className="shrink-0"><circle cx="10.500" cy="6.500" r="5.500" fill="none" stroke="#222" strokeWidth="1.100" /><path d="M6.500 10.500L1 16" stroke="#222" strokeWidth="1.300" /></svg>
        <span className="ml-[10px] w-[176px] whitespace-nowrap">Type here to search</span>
        <svg width="62" height="32" viewBox="0 0 62 32" className="shrink-0">
          <path d="M24 3c1.500 7 3 9 10 11-7 2-8.500 4-10 11-1.500-7-3-9-10-11 7-2 8.500-4 10-11z" fill="#f8c821" />
          <path d="M46 12c.6 3 1.500 4 5 5-3.500 1-4.400 2-5 5-.6-3-1.500-4-5-5 3.500-1 4.400-2 5-5z" fill="#f8c821" />
          <path d="M7 20c.3 2 1 3 3 3.500-2 .5-2.700 1.500-3 3.500-.3-2-1-3-3-3.500 2-.5 2.700-1.500 3-3.500z" fill="#3d8fe0" />
          <circle cx="43" cy="6" r="1.800" fill="#d4602a" /><circle cx="55" cy="25" r="1.800" fill="#9a9a50" />
        </svg>
      </div>
      <div className="ml-[7px] flex shrink-0">
        <TaskIcon>
          <svg width="18" height="18" viewBox="0 0 18 18" fill="none" stroke="#fff"><path d="M1 1.500H12M1 16.500H12M2.500 4.500h9v9h-9zM16 1v3M16 8v9" /><rect x="14.500" y="5" width="3" height="2" fill="#fff" /></svg>
        </TaskIcon>
        <TaskIcon>
          <svg width="22" height="22" viewBox="0 0 22 22">
            <path d="M7 2h5c-3 2-5 6-5 11 0 3-1 5-2 6H4c-2 0-3-2-3-4 0-5 2-13 6-13z" fill="#35b08f" />
            <path d="M2 9c2-2 6-2 7 0l-2 6H1z" fill="#f0b429" />
            <path d="M15 20h-5c3-2 5-6 5-11 0-3 1-5 2-6h1c2 0 3 2 3 4 0 5-2 13-6 13z" fill="#b84ec6" />
            <path d="M5 18c2 2 5 2 7 0l1-4H6z" fill="#e5534b" />
          </svg>
        </TaskIcon>
        <TaskIcon>
          <svg width="22" height="18" viewBox="0 0 22 18"><path d="M0 2a1 1 0 0 1 1-1h7l2 2h11a1 1 0 0 1 1 1v12a1 1 0 0 1-1 1H1a1 1 0 0 1-1-1z" fill="#ecb93b" /><rect x="0" y="4" width="22" height="13" fill="#fbd86f" /><path d="M6 17v-5a1 1 0 0 1 1-1h8a1 1 0 0 1 1 1v5h-3v-3H9v3z" fill="#3f9ade" /></svg>
        </TaskIcon>
        <TaskIcon>
          <svg width="23" height="24" viewBox="0 0 23 24">
            <path d="M7 5c0-5 9-5 9 0" fill="none" stroke="#2ea2e6" strokeWidth="1.600" />
            <rect x="0" y="4" width="23" height="20" rx="3" fill="#f4f4f4" />
            <rect x="7" y="9" width="4" height="4" fill="#e5502c" /><rect x="12" y="9" width="4" height="4" fill="#79b53a" />
            <rect x="7" y="14" width="4" height="4" fill="#2f9ee6" /><rect x="12" y="14" width="4" height="4" fill="#f2b818" />
          </svg>
        </TaskIcon>
        <TaskIcon>
          <svg width="23" height="22" viewBox="0 0 23 22">
            <path d="M4 8l9-8 9 8v12a1 1 0 0 1-1 1H4z" fill="#2d8fd8" />
            <path d="M12 9h10v11H12z" fill="#56b6ea" />
            <rect x="0" y="9" width="11" height="11" rx="1.500" fill="#0f5fa8" />
            <circle cx="5.500" cy="14.500" r="2.800" fill="none" stroke="#fff" strokeWidth="1.300" />
          </svg>
        </TaskIcon>
        <TaskIcon>
          <div className="flex h-6 w-6 items-end justify-center overflow-hidden rounded-full bg-[#1877f2]"><FaFacebookF size={20} color="#fff" /></div>
        </TaskIcon>
        <TaskIcon>
          <div className="flex h-6 w-6 items-center justify-center rounded-full bg-white"><FaWhatsapp size={16} color="#35c15a" /></div>
        </TaskIcon>
        <TaskIcon>
          <div className="flex h-6 w-6 items-center justify-center rounded-full bg-[#3a9be0]"><FaTelegramPlane size={15} color="#fff" /></div>
        </TaskIcon>
        <TaskIcon>
          <div className="flex h-[18px] w-6 items-center justify-center rounded-[4px] bg-[#e8202a]">
            <div className="h-0 w-0 border-y-[3.500px] border-l-[6px] border-y-transparent border-l-white" />
          </div>
        </TaskIcon>
        <TaskIcon>
          <div className="flex h-6 w-6 items-center justify-center rounded-[6px] bg-gradient-to-tr from-[#f9a13b] via-[#e1306c] to-[#7a3bc4]"><FaInstagram size={19} color="#fff" /></div>
        </TaskIcon>
        <TaskIcon>
          <svg width="18" height="24" viewBox="0 0 18 24">
            <rect width="18" height="24" rx="2" fill="#7b8a94" />
            <rect x="2" y="2" width="14" height="5" fill="#54c5f0" />
            <path d="M2 9h3v3H2zM7 9h3v3H7zM2 14h3v3H2zM7 14h3v3H7zM2 19h3v3H2zM7 19h3v3H7z" fill="#d4d8da" />
            <rect x="12" y="9" width="4" height="13" fill="#1e3f78" />
          </svg>
        </TaskIcon>
        <TaskIcon line="w-[37px]">
          <svg width="25" height="25" viewBox="0 0 24 24">
            <circle cx="12" cy="12" r="12" fill="#ea4335" />
            <path d="M12 12L1.600 18a12 12 0 0 0 10.400 6l5-8z" fill="#34a853" />
            <path d="M12 6.500h10.600A12 12 0 0 1 12 24l5.200-9z" fill="#fbbc04" />
            <circle cx="12" cy="12" r="5.500" fill="#fff" /><circle cx="12" cy="12" r="4.300" fill="#4285f4" />
          </svg>
        </TaskIcon>
        <TaskIcon>
          <svg width="20" height="24" viewBox="0 0 20 24">
            <rect x="13" y="0" width="7" height="24" rx="1" fill="#e8a91f" />
            <rect x="6.500" y="6" width="7" height="18" rx="1" fill="#f4c632" />
            <rect x="0" y="12" width="7" height="12" rx="1" fill="#fbdf75" />
          </svg>
        </TaskIcon>
        <TaskIcon active line="w-full">
          <svg width="25" height="24" viewBox="0 0 25 24">
            <rect x="6" y="0" width="19" height="24" rx="1" fill="#21a366" />
            <rect x="15" y="0" width="10" height="12" fill="#33c481" />
            <rect x="6" y="12" width="19" height="12" fill="#107c41" />
            <rect x="0" y="6" width="12" height="12" rx="1" fill="#185c37" />
            <text x="2.500" y="15.500" fontSize="10" fontWeight="bold" fill="#fff">X</text>
          </svg>
        </TaskIcon>
      </div>
      <svg width="24" height="18" viewBox="0 0 24 18" className="ml-[16px] shrink-0">
        <path d="M0 8L5 2l4 5 3-4 12 3v12H12L7 8 4 12z" fill="#d8431a" />
        <path d="M12 12l6-6 6 6v6H12z" fill="#8e2a10" />
      </svg>
      <span className="ml-[9px] w-[40px] text-[13.500px]">TMGH</span>
      <div className="ml-[24px] flex items-center gap-[7px]">
        <svg width="12" height="7" viewBox="0 0 12 7"><path d="M1 6l5-5 5 5" stroke="#fff" fill="none" strokeWidth="1.200" /></svg>
        <svg width="15" height="20" viewBox="0 0 15 20" className="ml-[4px]" fill="none" stroke="#fff"><rect x="1" y="5" width="8" height="10" rx="2" /><path d="M9 9l5-2.500v7L9 11M3 1.500h4M3 18.500h4" /></svg>
        <svg width="17" height="14" viewBox="0 0 17 14" className="ml-[1px]" fill="none" stroke="#fff"><path d="M2 2v3M5 2v3M1 5h5v2L3.500 9 1 7z" /><rect x="7" y="3" width="9.500" height="9" /><path d="M10 6l3 3M13 6l-3 3" /></svg>
        <Wifi size={18} strokeWidth={1.300} className="ml-[2px]" />
        <Volume2 size={17} strokeWidth={1.300} />
      </div>
      <span className="ml-[14px] text-[12px]" style={{ fontFamily: '"DejaVu Sans", sans-serif' }}>ع</span>
      <div className="ml-[14px] w-[70px] text-center text-[11.500px] leading-[16px]" style={{ fontFamily: '"DejaVu Sans", "Noto Sans", sans-serif' }}>
        <div dir="ltr">12:46 ص</div>
        <div dir="ltr">٢٠٢٥/١٢/٠٢</div>
      </div>
      <svg width="17" height="17" viewBox="0 0 17 17" className="ml-[6px] shrink-0"><path d="M0 0h17v13h-6l-2.500 3-2.500-3H0z" fill="#fff" /><path d="M3 4h11M3 7h11M3 10h7" stroke="#261c1e" /></svg>
    </div>
  )
}

export default function App() {
  return (
    <div className="relative flex h-[768px] w-[1362px] flex-col overflow-hidden bg-[#f0f0f0]" style={{ fontFamily: '"Open Sans", "DejaVu Sans", sans-serif' }}>
      <TitleBar />
      <TabsRow />
      <Ribbon />
      <FormulaBar />
      <ColumnHeaders />
      <Sheet />
      <SheetTabs />
      <StatusBar />
      <Taskbar />
      {/* watermark */}
      <div className="pointer-events-none absolute left-[590px] top-[670px] w-[180px] text-center font-bold text-[#808080]/25" style={{ fontFamily: '"DejaVu Sans", sans-serif' }}>
        <div className="text-[46px] leading-[60px]">مستقل</div>
        <div className="text-[25px] leading-[24px]">mostaql.com</div>
      </div>
    </div>
  )
}
